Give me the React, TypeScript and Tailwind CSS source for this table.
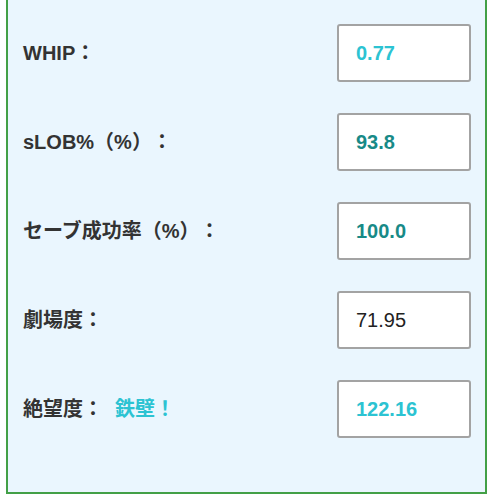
const ROWS = [
  { label: "WHIP：", value: "0.77", valueClass: "text-[#2cc3d2] font-bold" },
  { label: "sLOB%（%）：", value: "93.8", valueClass: "text-[#188a87] font-bold" },
  { label: "セーブ成功率（%）：", value: "100.0", valueClass: "text-[#188a87] font-bold" },
  { label: "劇場度：", value: "71.95", valueClass: "text-[#222]" },
  { label: "絶望度：", extra: "鉄壁！", value: "122.16", valueClass: "text-[#2cc3d2] font-bold" },
];

export default function App() {
  return (
    <main className="min-h-screen bg-white px-[6px] pb-[6px] font-['Liberation_Sans','Noto_Sans_CJK_JP',sans-serif]">
      {/* Panel (top edge is scrolled out of view) */}
      <div className="-mt-2 border-2 border-[#43a047] bg-[#eaf6fe] pt-[30px] pb-[54px] pl-[15px] pr-[14px]">
        <div className="flex flex-col gap-[31px]">
          {ROWS.map(r => (
            <div key={r.label} className="flex items-center justify-between">
              <div className="text-[20px] font-bold text-[#333] [text-spacing-trim:space-all]">
                {r.label}
                {r.extra && <span className="ml-[12px] text-[#2cc3d2]">{r.extra}</span>}
              </div>
              <div className="h-[58px] w-[134px] rounded-[3px] border-2 border-[#a3a3a3] bg-white pl-[17px] flex items-center">
                <span className={`text-[20px] ${r.valueClass}`}>{r.value}</span>
              </div>
            </div>
          ))}
        </div>
      </div>
    </main>
  );
}
